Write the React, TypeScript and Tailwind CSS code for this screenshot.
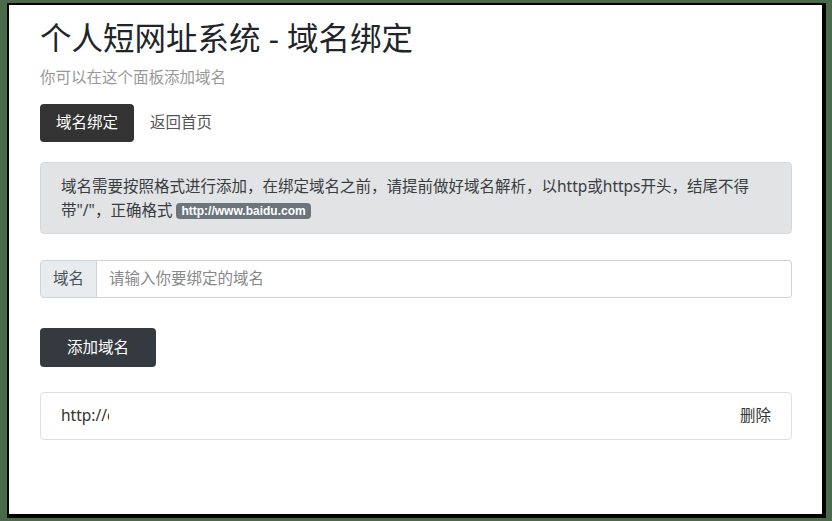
export default function App() {
  return (
    <div
      className="h-[521px] w-[832px] overflow-hidden bg-[#4a6a4a] pl-[7px] pt-[3px]"
      style={{ fontFamily: '"Noto Sans", "Noto Sans CJK SC", sans-serif' }}
    >
      <div className="h-[515px] w-[819px] border-t-2 border-l-2 border-r-4 border-b-4 border-black bg-white pl-[31px] pr-[30px]">
        <h1 className="mt-[14px] text-[31.5px] leading-[1.2] font-normal text-[#212529]">个人短网址系统 - 域名绑定</h1>
        <p className="mt-[8px] text-[15.5px] leading-6 text-[#999]">你可以在这个面板添加域名</p>

        <div className="mt-[15px] flex items-center">
          <a className="flex h-[38px] items-center rounded bg-[#333] px-4 text-[15.5px] text-white">域名绑定</a>
          <a className="flex h-[38px] items-center px-4 text-[15.5px] text-[#555]">返回首页</a>
        </div>

        <div className="mt-[20px] rounded border border-[#d6d8db] bg-[#e2e3e5] px-5 py-[11px] text-[15.5px] leading-[24px] text-[#383d41]">
          域名需要按照格式进行添加，在绑定域名之前，请提前做好域名解析，以http或https开头，结尾不得带"/"，正确格式{' '}
          <span
            className="inline-block rounded bg-[#6c757d] px-[5px] align-[1px] text-[12px] leading-[16px] font-bold text-white"
            style={{ fontFamily: '"Liberation Sans", sans-serif' }}
          >
            http://www.baidu.com
          </span>
        </div>

        <div className="mt-[26px] flex h-[38px] w-full">
          <span className="flex items-center rounded-l border border-[#ced4da] bg-[#e9ecef] px-3 text-[15.5px] text-[#495057]">域名</span>
          <input
            className="flex-1 rounded-r border border-l-0 border-[#ced4da] px-3 text-[15.5px] text-[#495057] outline-none placeholder:text-[#888]"
            placeholder="请输入你要绑定的域名"
          />
        </div>

        <button className="mt-[30px] flex h-[39px] items-center rounded bg-[#343a40] px-[27px] text-[15.5px] text-white">添加域名</button>

        <ul className="mt-[25px]">
          <li className="flex h-[48px] items-center justify-between rounded border border-[#dfdfdf] px-5 text-[15.5px] text-[#333]">
            <span className="w-[48px] overflow-hidden whitespace-nowrap">http://dwz.cn</span>
            <a>删除</a>
          </li>
        </ul>
      </div>
    </div>
  );
}
